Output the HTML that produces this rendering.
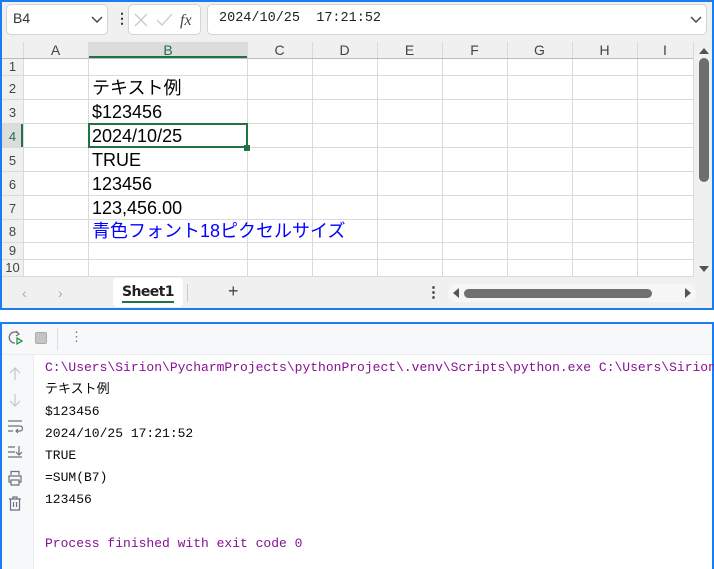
<!DOCTYPE html>
<html><head><meta charset="utf-8"><style>
*{margin:0;padding:0;box-sizing:border-box}
body{width:714px;height:569px;background:#fff;position:relative;overflow:hidden;font-family:"Liberation Sans","Noto Sans CJK JP",sans-serif}
.a{position:absolute}
#top{left:0;top:0;width:714px;height:310px;border:2px solid #1a7ef2;background:#f0f0f0}
#bot{left:0;top:322px;width:714px;height:247px;border:2px solid #1a7ef2;border-bottom:none;background:#fff}
.box{background:#fff;border:1px solid #d4d4d4;border-radius:5px}
.vl{position:absolute;width:1px;background:#dadada}
.hl{position:absolute;height:1px;background:#dadada}
.ch{position:absolute;top:42px;height:16px;font-size:14px;color:#444;text-align:center;line-height:16px}
.rh{position:absolute;left:2px;width:21px;font-size:13px;color:#444;text-align:center;line-height:16px}
.cell{position:absolute;left:92px;font-size:18px;line-height:22px;color:#000;white-space:nowrap}
.mono{font-family:"Liberation Mono","Noto Sans CJK JP",monospace;font-size:13px;line-height:16px;position:absolute;left:45px;white-space:nowrap;color:#080808}
.ic{position:absolute;left:7px;width:16px;height:16px}
</style></head><body>
<div id="top" class="a"></div>
<div class="a box" style="left:6px;top:4px;width:102px;height:31px"></div>
<div class="a" style="left:13px;top:10px;font-size:14px;color:#333">B4</div>
<svg class="a" style="left:91px;top:16px" width="12" height="8"><path d="M1 1 L6 6 L11 1" stroke="#444" fill="none" stroke-width="1.4"/></svg>
<div class="a" style="left:115px;top:10px;font-size:14px;color:#333;font-weight:bold">⋮</div>
<div class="a box" style="left:128px;top:4px;width:73px;height:31px"></div>
<svg class="a" style="left:133px;top:11px" width="66" height="18"><path d="M2 3 L14 15 M14 3 L2 15" stroke="#c8c8c8" stroke-width="1.3"/><path d="M24 9 L29 14 L39 3" stroke="#c8c8c8" fill="none" stroke-width="1.3"/><text x="47" y="14" font-family="Liberation Serif" font-style="italic" font-size="16" fill="#444">fx</text></svg>
<div class="a box" style="left:207px;top:4px;width:500px;height:31px"></div>
<div class="a" style="left:219px;top:11px;font-family:'Liberation Mono',monospace;font-size:13.5px;color:#222;white-space:pre">2024/10/25  17:21:52</div>
<svg class="a" style="left:690px;top:16px" width="12" height="8"><path d="M1 1 L6 6 L11 1" stroke="#444" fill="none" stroke-width="1.4"/></svg>
<div class="a" style="left:23px;top:58px;width:670px;height:219px;background:#fff"></div>
<div class="a" style="left:88px;top:42px;width:160px;height:16px;background:#dcdcdc"></div>
<div class="a" style="left:88px;top:56px;width:160px;height:2px;background:#217346"></div>
<div class="a" style="left:2px;top:123px;width:21px;height:24px;background:#dcdcdc"></div>
<div class="a" style="left:21px;top:123px;width:2px;height:24px;background:#217346"></div>
<div class="vl" style="left:23px;top:42px;height:235px"></div>
<div class="vl" style="left:88px;top:42px;height:235px"></div>
<div class="vl" style="left:247px;top:42px;height:235px"></div>
<div class="vl" style="left:312px;top:42px;height:235px"></div>
<div class="vl" style="left:377px;top:42px;height:235px"></div>
<div class="vl" style="left:442px;top:42px;height:235px"></div>
<div class="vl" style="left:507px;top:42px;height:235px"></div>
<div class="vl" style="left:572px;top:42px;height:235px"></div>
<div class="vl" style="left:637px;top:42px;height:235px"></div>
<div class="vl" style="left:693px;top:42px;height:235px"></div>
<div class="hl" style="left:2px;top:58px;width:691px;background:#bbb"></div>
<div class="hl" style="left:2px;top:75px;width:691px"></div>
<div class="hl" style="left:2px;top:99px;width:691px"></div>
<div class="hl" style="left:2px;top:123px;width:691px"></div>
<div class="hl" style="left:2px;top:147px;width:691px"></div>
<div class="hl" style="left:2px;top:171px;width:691px"></div>
<div class="hl" style="left:2px;top:195px;width:691px"></div>
<div class="hl" style="left:2px;top:219px;width:691px"></div>
<div class="hl" style="left:2px;top:242px;width:691px"></div>
<div class="hl" style="left:2px;top:259px;width:691px"></div>
<div class="hl" style="left:2px;top:276px;width:691px"></div>
<div class="ch" style="left:23px;width:65px">A</div>
<div class="ch" style="left:88px;width:160px;color:#217346">B</div>
<div class="ch" style="left:247px;width:65px">C</div>
<div class="ch" style="left:312px;width:65px">D</div>
<div class="ch" style="left:377px;width:65px">E</div>
<div class="ch" style="left:442px;width:65px">F</div>
<div class="ch" style="left:507px;width:65px">G</div>
<div class="ch" style="left:572px;width:65px">H</div>
<div class="ch" style="left:637px;width:56px">I</div>
<div class="rh" style="top:59px">1</div>
<div class="rh" style="top:81px">2</div>
<div class="rh" style="top:105px">3</div>
<div class="rh" style="top:129px;color:#217346">4</div>
<div class="rh" style="top:153px">5</div>
<div class="rh" style="top:177px">6</div>
<div class="rh" style="top:201px">7</div>
<div class="rh" style="top:224px">8</div>
<div class="rh" style="top:243px">9</div>
<div class="rh" style="top:260px">10</div>
<div class="cell" style="top:77px">テキスト例</div>
<div class="cell" style="top:101px">$123456</div>
<div class="cell" style="top:125px">2024/10/25</div>
<div class="cell" style="top:149px">TRUE</div>
<div class="cell" style="top:173px">123456</div>
<div class="cell" style="top:197px">123,456.00</div>
<div class="cell" style="top:220px;color:#0000ff">青色フォント18ピクセルサイズ</div>
<div class="a" style="left:88px;top:123px;width:160px;height:25px;border:2px solid #217346"></div>
<div class="a" style="left:244px;top:145px;width:6px;height:6px;background:#217346"></div>
<svg class="a" style="left:698px;top:45px" width="12" height="10"><path d="M1 9 L6 3 L11 9Z" fill="#555"/></svg>
<div class="a" style="left:699px;top:58px;width:10px;height:124px;background:#6e6e6e;border-radius:5px"></div>
<svg class="a" style="left:698px;top:265px" width="12" height="10"><path d="M1 1 L6 7 L11 1Z" fill="#555"/></svg>
<div class="a" style="left:2px;top:278px;width:710px;height:30px;background:#f0f0f0"></div>
<div class="a" style="left:22px;top:285px;font-size:14px;color:#aaa">‹</div>
<div class="a" style="left:58px;top:285px;font-size:14px;color:#aaa">›</div>
<div class="a" style="left:113px;top:278px;width:70px;height:29px;background:#fff;border-radius:4px"></div>
<div class="a" style="left:122px;top:284px;font-size:14px;font-weight:bold;color:#222;font-family:'DejaVu Sans',sans-serif;letter-spacing:-0.6px">Sheet1</div>
<div class="a" style="left:122px;top:301px;width:52px;height:2px;background:#217346"></div>
<div class="a" style="left:187px;top:284px;width:1px;height:18px;background:#ccc"></div>
<div class="a" style="left:228px;top:281px;font-size:18px;color:#444">+</div>
<div class="a" style="left:426px;top:283px;font-size:15px;color:#333;font-weight:bold">⋮</div>
<div class="a" style="left:448px;top:284px;width:248px;height:18px;background:#f6f6f6;border-radius:9px"></div>
<svg class="a" style="left:452px;top:288px" width="8" height="10"><path d="M7 0 L1 5 L7 10Z" fill="#555"/></svg>
<div class="a" style="left:464px;top:289px;width:188px;height:9px;background:#707070;border-radius:5px"></div>
<svg class="a" style="left:684px;top:288px" width="8" height="10"><path d="M1 0 L7 5 L1 10Z" fill="#555"/></svg>
<div id="bot" class="a"></div>
<div class="a" style="left:2px;top:324px;width:710px;height:31px;background:#f7f8fa;border-bottom:1px solid #ebecf0"></div>
<div class="a" style="left:2px;top:355px;width:32px;height:214px;background:#f7f8fa;border-right:1px solid #ebecf0"></div>
<svg class="a" style="left:7px;top:330px" width="16" height="16"><path d="M12 4 A5.5 5.5 0 1 0 8 13" stroke="#6c707e" fill="none" stroke-width="1.3"/><path d="M9 1 L12 4 L9 6" stroke="#6c707e" fill="none" stroke-width="1.2"/><path d="M10 8 L15 11 L10 14Z" stroke="#208a3c" fill="none" stroke-width="1.2"/></svg>
<div class="a" style="left:35px;top:332px;width:12px;height:12px;background:#c4c4c4;border-radius:2px;border:1px solid #aaa"></div>
<div class="a" style="left:57px;top:328px;width:1px;height:22px;background:#ddd"></div>
<div class="a" style="left:70px;top:329px;font-size:13px;color:#777">⋮</div>
<svg class="ic" style="top:366px" viewBox="0 0 16 16"><path d="M8 2 V14 M3 7 L8 2 L13 7" stroke="#c4c6cc" fill="none" stroke-width="1.2"/></svg>
<svg class="ic" style="top:392px" viewBox="0 0 16 16"><path d="M8 2 V14 M3 9 L8 14 L13 9" stroke="#c4c6cc" fill="none" stroke-width="1.2"/></svg>
<svg class="ic" style="top:418px" viewBox="0 0 16 16"><path d="M1 3 H15 M1 8 H13 A2.5 2.5 0 0 1 13 13 H9 M11 11 L9 13 L11 15 M1 13 H6" stroke="#6c707e" fill="none" stroke-width="1.2"/></svg>
<svg class="ic" style="top:444px" viewBox="0 0 16 16"><path d="M1 3 H8 M1 8 H8 M1 13 H15 M12 2 V11 M9 8 L12 11 L15 8" stroke="#6c707e" fill="none" stroke-width="1.2"/></svg>
<svg class="ic" style="top:470px" viewBox="0 0 16 16"><path d="M4 5 V1.5 H12 V5 M4 12 H2 V6 H14 V12 H12 M4 10 H12 V15 H4Z" stroke="#6c707e" fill="none" stroke-width="1.2"/></svg>
<svg class="ic" style="top:495px" viewBox="0 0 16 16"><path d="M2 4 H14 M6 4 V2 H10 V4 M3.5 4 V15 H12.5 V4 M6.5 7 V12 M9.5 7 V12" stroke="#6c707e" fill="none" stroke-width="1.2"/></svg>
<div class="mono" style="top:360px;color:#871094">C:\Users\Sirion\PycharmProjects\pythonProject\.venv\Scripts\python.exe C:\Users\Sirion</div>
<div class="mono" style="top:382px">テキスト例</div>
<div class="mono" style="top:404px">$123456</div>
<div class="mono" style="top:426px">2024/10/25 17:21:52</div>
<div class="mono" style="top:448px">TRUE</div>
<div class="mono" style="top:470px">=SUM(B7)</div>
<div class="mono" style="top:492px">123456</div>
<div class="mono" style="top:536px;color:#871094">Process finished with exit code 0</div>
</body></html>
